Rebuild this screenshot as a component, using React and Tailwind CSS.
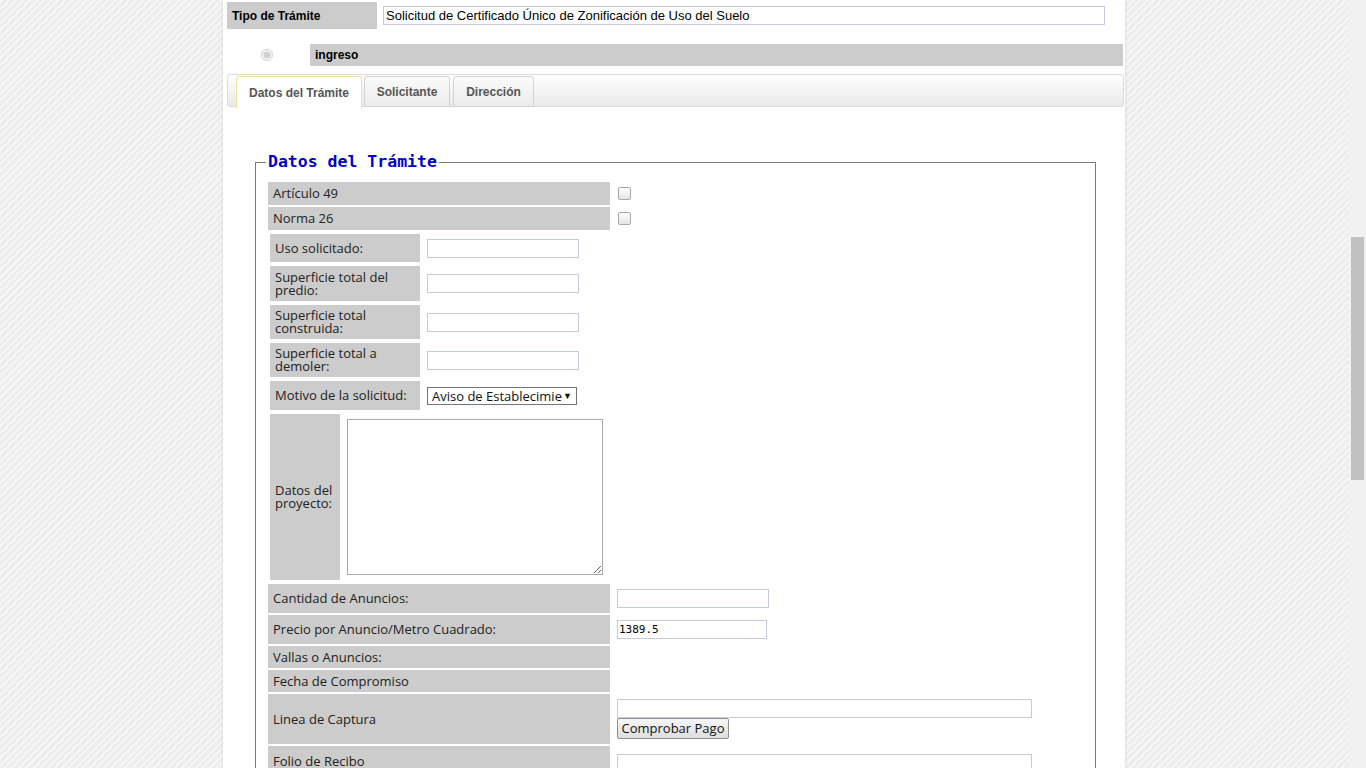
import React from "react";

const label = "bg-[#cccccc] text-[#222] flex items-center font-['Open_Sans',sans-serif] text-[13px] leading-[13px]";
const inputCls = "border border-[#c6cbe2] bg-white h-[19px] outline-none";

function Check() {
  return (
    <input
      type="checkbox"
      className="appearance-none w-[13px] h-[13px] rounded-[2px] border border-[#a9a9a9] bg-[linear-gradient(#ffffff,#e4e4e4)] ml-[8px]"
    />
  );
}

export default function App() {
  return (
    <div className="flex w-[1366px] h-[768px] overflow-hidden">
      <div className="flex-1 h-full bg-[#efefef] bg-[repeating-linear-gradient(135deg,#f4f4f4_0px,#f4f4f4_3px,#ebebeb_3px,#ebebeb_5px)]">
        <div className="ml-[223px] w-[902px] h-full bg-white shadow-[0_0_3px_rgba(0,0,0,0.12)] pt-[2px]">
          {/* Tipo de trámite */}
          <div className="flex items-center h-[27px] ml-[4px]">
            <div className="w-[150px] h-full bg-[#cccccc] flex items-center pl-[5px] font-['Liberation_Sans',Arial,sans-serif] text-[12px] font-bold text-black">
              Tipo de Trámite
            </div>
            <input
              readOnly
              value="Solicitud de Certificado Único de Zonificación de Uso del Suelo"
              className="ml-[6px] w-[722px] h-[19px] border border-[#c9c6e4] px-[2px] font-['Liberation_Sans',Arial,sans-serif] text-[13px] text-black outline-none"
            />
          </div>

          {/* ingreso */}
          <div className="flex items-center h-[22px] mt-[15px]">
            <div className="w-[87px] flex justify-center">
              <input type="radio" checked disabled readOnly className="w-[12px] h-[12px] m-0 accent-[#888]" />
            </div>
            <div className="w-[813px] h-full bg-[#cccccc] flex items-center pl-[5px] font-['Liberation_Sans',Arial,sans-serif] text-[12px] font-bold text-black">
              ingreso
            </div>
          </div>

          {/* Tabs */}
          <div className="ml-[4px] mt-[8px] w-[897px] h-[33px] rounded-[3px] border border-[#dcdcdc] bg-[linear-gradient(#ffffff,#e9e9e9)] flex items-start pl-[8px] pt-[1px] gap-[2px] font-['Liberation_Sans',Arial,sans-serif] text-[12px] font-bold text-[#555]">
            <div className="w-[126px] h-[33px] rounded-t-[3px] border border-b-0 border-[#f3e2a0] bg-white flex items-center justify-center relative z-10">
              Datos del Trámite
            </div>
            <div className="w-[86px] h-[31px] rounded-t-[3px] border border-[#d3d3d3] bg-[linear-gradient(#fafafa,#ececec)] flex items-center justify-center">
              Solicitante
            </div>
            <div className="ml-[1px] w-[81px] h-[31px] rounded-t-[3px] border border-[#d3d3d3] bg-[linear-gradient(#fafafa,#ececec)] flex items-center justify-center">
              Dirección
            </div>
          </div>

          {/* Fieldset */}
          <fieldset className="ml-[32px] mt-[45px] w-[841px] border border-[#7a7a7a] pl-[12px] pt-[10px] pb-[20px]">
            <legend className="ml-[-2px] px-[2px] font-['DejaVu_Sans_Mono',monospace] font-bold text-[16.5px] leading-[20px] text-[#0000cd]">
              Datos del Trámite
            </legend>

            <div className="flex flex-col">
              <div className="flex items-center h-[23px]">
                <div className={`${label} w-[342px] h-full pl-[5px]`}>Artículo 49</div>
                <Check />
              </div>
              <div className="flex items-center h-[23px] mt-[2px]">
                <div className={`${label} w-[342px] h-full pl-[5px]`}>Norma 26</div>
                <Check />
              </div>

              {/* nested */}
              <div className="flex flex-col gap-[4px] mt-[4px] pl-[2px]">
                <div className="flex items-center h-[28px]">
                  <div className={`${label} w-[150px] h-full pl-[5px]`}>Uso solicitado:</div>
                  <input className={`${inputCls} ml-[7px] w-[152px]`} />
                </div>
                <div className="flex items-center h-[35px]">
                  <div className={`${label} w-[150px] h-full pl-[5px] pr-[4px] leading-[12px]`}>Superficie total del predio:</div>
                  <input className={`${inputCls} ml-[7px] w-[152px]`} />
                </div>
                <div className="flex items-center h-[34px]">
                  <div className={`${label} w-[150px] h-full pl-[5px] pr-[40px] leading-[12px]`}>Superficie total construida:</div>
                  <input className={`${inputCls} ml-[7px] w-[152px]`} />
                </div>
                <div className="flex items-center h-[34px]">
                  <div className={`${label} w-[150px] h-full pl-[5px] pr-[20px] leading-[12px]`}>Superficie total a demoler:</div>
                  <input className={`${inputCls} ml-[7px] w-[152px]`} />
                </div>
                <div className="flex items-center h-[29px]">
                  <div className={`${label} w-[150px] h-full pl-[5px]`}>Motivo de la solicitud:</div>
                  <div className="ml-[7px] w-[150px] h-[18px] border border-[#767676] bg-white flex items-center justify-between pl-[4px] pr-[4px] font-['Open_Sans',sans-serif] text-[13px] text-[#111]">
                    <span className="leading-[16px] whitespace-nowrap overflow-hidden">Aviso de Establecimie</span>
                    <span className="text-[9px] leading-[16px]">▼</span>
                  </div>
                </div>
                <div className="flex items-center h-[166px]">
                  <div className={`${label} w-[70px] h-full pl-[5px]`}>Datos del proyecto:</div>
                  <textarea className="ml-[7px] w-[256px] h-[156px] border border-[#a9a9a9] outline-none resize" />
                </div>
              </div>

              <div className="flex items-center h-[29px] mt-[4px]">
                <div className={`${label} w-[342px] h-full pl-[5px]`}>Cantidad de Anuncios:</div>
                <input className={`${inputCls} ml-[7px] w-[152px]`} />
              </div>
              <div className="flex items-center h-[29px] mt-[2px]">
                <div className={`${label} w-[342px] h-full pl-[5px]`}>Precio por Anuncio/Metro Cuadrado:</div>
                <input
                  readOnly
                  value="1389.5"
                  className={`${inputCls} ml-[7px] w-[150px] pl-[1px] font-['DejaVu_Sans_Mono',monospace] text-[11px] text-black`}
                />
              </div>
              <div className="flex items-center h-[22px] mt-[2px]">
                <div className={`${label} w-[342px] h-full pl-[5px]`}>Vallas o Anuncios:</div>
              </div>
              <div className="flex items-center h-[22px] mt-[2px]">
                <div className={`${label} w-[342px] h-full pl-[5px]`}>Fecha de Compromiso</div>
              </div>
              <div className="flex items-start h-[50px] mt-[2px]">
                <div className={`${label} w-[342px] h-full pl-[5px]`}>Linea de Captura</div>
                <div className="ml-[7px] pt-[5px] flex flex-col items-start">
                  <input className={`${inputCls} w-[415px]`} />
                  <button className="h-[21px] w-[112px] border border-[#8f8f8f] rounded-[2px] bg-[linear-gradient(#f6f6f6,#dedede)] font-['Open_Sans',sans-serif] text-[13px] leading-[13px] text-[#111]">
                    Comprobar Pago
                  </button>
                </div>
              </div>
              <div className="flex items-start h-[30px] mt-[2px]">
                <div className={`${label} w-[342px] h-full pl-[5px]`}>Folio de Recibo</div>
                <div className="ml-[7px] pt-[5px]">
                  <input className={`${inputCls} w-[415px]`} />
                </div>
              </div>
            </div>
          </fieldset>
        </div>
      </div>
      <div className="w-[17px] h-full bg-[#f1f1f1] flex flex-col">
        <div className="mt-[237px] mx-[2px] h-[243px] bg-[#c1c1c1]" />
      </div>
    </div>
  );
}
